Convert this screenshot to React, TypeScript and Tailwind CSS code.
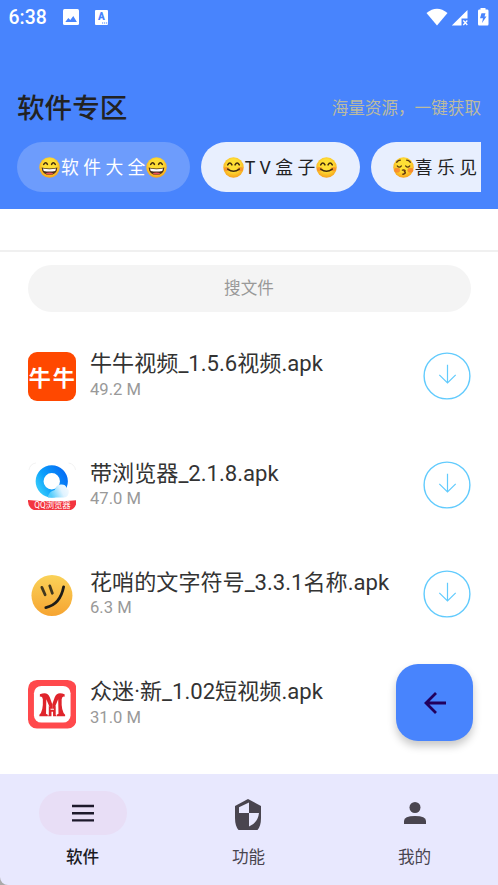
import type { ReactNode } from "react";

type Mood = "grin" | "blush" | "kiss";

const Smile = ({ kind }: { kind: Mood }) => (
  <svg viewBox="0 0 40 40" className="h-[21px] w-[21px] shrink-0" role="img">
    <defs>
      <radialGradient id={`face-${kind}`} cx="50%" cy="40%" r="60%">
        <stop offset="0.5" stopColor="#fedf35" />
        <stop offset="1" stopColor="#f7a21c" />
      </radialGradient>
    </defs>
    <circle cx="20" cy="20" r="19.5" fill={`url(#face-${kind})`} />
    {kind === "grin" && (
      <g>
        <path d="M9 14q4-6 7 0M24 14q3-6 7 0" fill="none" stroke="#422b0d" strokeWidth="3" strokeLinecap="round" />
        <path d="M5 20q15 4 30 0q-1 14-15 14T5 20z" fill="#4a2e18" />
        <path d="M7.500 22q12.500 3 25 0l-1.500 4.500q-11 2-22 0z" fill="#fff" />
        <path d="M12 31.500q8-4 16 0q-8 4-16 0z" fill="#e8505b" />
      </g>
    )}
    {kind === "blush" && (
      <g>
        <ellipse cx="7" cy="23" rx="5.500" ry="4" fill="#f78b29" opacity=".75" />
        <ellipse cx="33" cy="23" rx="5.500" ry="4" fill="#f78b29" opacity=".75" />
        <path d="M9 15q4-7 8 0M23 15q4-7 8 0M9 23q11 8.500 22 0" fill="none" stroke="#422b0d" strokeWidth="3" strokeLinecap="round" />
      </g>
    )}
    {kind === "kiss" && (
      <g>
        <ellipse cx="8" cy="25" rx="5.500" ry="4.500" fill="#f6762d" opacity=".7" />
        <ellipse cx="33" cy="25" rx="5.500" ry="4.500" fill="#f6762d" opacity=".7" />
        <path d="M8 17q4 5 8 0M24 17q4 5 8 0M7 10q3-4 7-4M26 6q4 0 7 4" fill="none" stroke="#5a3a10" strokeWidth="2.400" strokeLinecap="round" />
        <path d="M18 25q7-1 4 3q4 3-3 5" fill="none" stroke="#5a3210" strokeWidth="2.800" strokeLinecap="round" />
      </g>
    )}
  </svg>
);

const Chip = ({ kind, label, active, cut }: { kind: Mood; label: string; active?: boolean; cut?: boolean }) => (
  <div
    className={`flex h-[50px] items-center pl-[22px] text-[17.8px] whitespace-pre ${
      cut ? "flex-1 rounded-l-full" : "shrink-0 rounded-full pr-[22.5px]"
    } ${active ? "bg-[#6d9cfc] text-white" : "bg-[#e8effe] text-[#222]"}`}
  >
    <Smile kind={kind} />
    <span className="mx-[1px] mt-[2px]">{label}</span>
    {!cut && <Smile kind={kind} />}
  </div>
);

const NiuIcon = () => (
  <div className="flex h-[48.5px] w-[48.5px] items-center justify-center rounded-[9px] bg-[#ff4800] pt-[5px] text-[22px] leading-none font-bold tracking-[2px] text-white">
    <span className="-mr-[2px]">牛牛</span>
  </div>
);

const BrowserIcon = () => (
  <svg viewBox="0 0 49 49" className="h-[48.5px] w-[48.5px]">
    <defs>
      <linearGradient id="ring" x1="0" y1="0.8" x2="1" y2="0.2">
        <stop offset="0" stopColor="#2fc4fb" />
        <stop offset="0.35" stopColor="#0ba0fb" />
        <stop offset="1" stopColor="#0672f5" />
      </linearGradient>
      <linearGradient id="cloud" x1="0" y1="0.3" x2="1" y2="0">
        <stop offset="0" stopColor="#55cdfc" />
        <stop offset="0.55" stopColor="#e0f3ff" />
        <stop offset="1" stopColor="#f6fbff" />
      </linearGradient>
      <clipPath id="tile">
        <rect width="49" height="49" rx="9" />
      </clipPath>
    </defs>
    <path d="M1 8Q2 2 8 1M41 1Q47 2 48 8" fill="none" stroke="#eee" strokeWidth="0.8" />
    <circle cx="24" cy="19.500" r="12.300" fill="none" stroke="url(#ring)" strokeWidth="8" />
    <path d="M20 35.800q1-6 7-7.500q2-6 7-5.500q4 0 5 3.500q3 1.500 2 5.500q-1 4-5 4z" fill="url(#cloud)" />
    <g clipPath="url(#tile)">
      <path d="M0 38.500Q24 41 49 38.500V49H0Z" fill="#f3353f" />
      <text x="6.200" y="46.600" fontSize="8.600" textLength="37" lengthAdjust="spacingAndGlyphs" fontWeight="400" fill="#fff">
        QQ浏览器
      </text>
    </g>
  </svg>
);

const FaceIcon = () => (
  <svg viewBox="0 0 49 49" className="h-[48.5px] w-[48.5px]">
    <defs>
      <linearGradient id="amber" x1="0" y1="0" x2="0" y2="1">
        <stop offset="0" stopColor="#fad258" />
        <stop offset="1" stopColor="#f6a431" />
      </linearGradient>
    </defs>
    <circle cx="24.200" cy="24.800" r="20.700" fill="url(#amber)" />
    <g fill="none" stroke="#1d1c18" strokeWidth="2.800" strokeLinecap="round">
      <path d="M14 16.500l3.300 7.500" stroke="#41381f" />
      <path d="M22 15l2.600 7.500" stroke="#41381f" />
      <path d="M36 16q-3.500 18-18 21" />
    </g>
  </svg>
);

const MIcon = () => (
  <svg viewBox="0 0 49 49" className="h-[48.5px] w-[48.5px]">
    <rect width="49" height="49" rx="9" fill="#ff494c" />
    <rect x="6" y="6" width="37" height="37" rx="7.500" fill="#fff" />
    <g fill="#df242b">
      <path d="M12 14.500Q19.500 11 22 17.500L24.500 24.500V29H22.500L18.500 19.500L18.200 34L20 35V36.500H11.500V35Q15.500 32 15 19.500Q14.500 16 12 17Z" />
      <path d="M37 14.500Q29.500 11 27 17.500L24.500 24.500V29H26.500L30.500 19.500L30.800 34L29 35V36.500H37.500V35Q33.500 32 34 19.500Q34.500 16 37 17Z" />
      <path d="M21 26l1.800 2v2h3.400v-2l1.800-2v9l.8 1.500h-3.500V32h-1.600v4.500h-3.500L21 35z" />
    </g>
  </svg>
);

const Download = () => (
  <svg viewBox="0 0 48 48" className="-mt-[0.500px] h-12 w-12 shrink-0" fill="none" stroke="#62cbfd">
    <circle cx="24" cy="24" r="22.900" strokeWidth="1.400" />
    <path d="M24.500 12.700v18M16.300 22.800l8.200 8.200 8.200-8.200" strokeWidth="1.200" />
  </svg>
);

const FileRow = ({ icon, name, size, action = true }: { icon: ReactNode; name: string; size: string; action?: boolean }) => (
  <li className="flex h-[109.2px] items-start">
    <div className="h-[48.5px] w-[48.5px] shrink-0">{icon}</div>
    <div className="ml-[14px] flex-1 whitespace-nowrap">
      <div className="mt-[-2px] h-[28.5px] text-[22.1px] leading-[26px] text-[#333]">{name}</div>
      <div className="text-[16.6px] leading-[22px] text-[#999]">{size}</div>
    </div>
    {action && <Download />}
  </li>
);

const NavItem = ({ icon, label, active }: { icon: ReactNode; label: string; active?: boolean }) => (
  <div className={`flex flex-1 flex-col items-center pt-[17px] ${active ? "font-medium text-[#1c1b1f]" : "text-[#49454f]"}`}>
    <div className={`flex h-11 w-[88px] items-center justify-center rounded-full ${active ? "bg-[#e8def6]" : ""}`}>{icon}</div>
    <div className="mt-[11px] mr-[1px] text-[16.6px] leading-6">{label}</div>
  </div>
);

export default function App() {
  return (
    <div className="relative flex h-[885px] w-[498px] flex-col overflow-hidden bg-white font-[Roboto,'Noto_Sans_CJK_SC',sans-serif]">
      <header className="flex h-[209px] shrink-0 flex-col bg-[#4884fd]">
        <div className="flex h-[34px] items-center pr-[9px] pl-[8.5px] text-white">
          <span className="mt-[2px] text-[19.4px] leading-none font-medium">6:38</span>
          <svg viewBox="0 0 16 16" className="ml-[16.5px] h-4 w-4">
            <rect width="16" height="16" rx="1.500" fill="#fff" />
            <path d="M2.300 13l3-4 2 2 3-4 3.600 6z" fill="#4884fd" />
          </svg>
          <svg viewBox="0 0 13 15" className="ml-4 h-[15px] w-[13px]">
            <rect width="13" height="15" rx="1" fill="#fff" />
            <text x="6.500" y="10.200" textAnchor="middle" fontSize="10" fontWeight="900" fill="#4884fd">A</text>
            <path d="M7 13h1.200M9 13h1.200M11 13h1.200" stroke="#4884fd" strokeWidth="1.200" />
          </svg>
          <svg viewBox="0 0 63 18" className="-mt-[1px] ml-auto h-[18px] w-[63px]" fill="#fff">
            <path d="M0.500 5Q11 -3.500 21.500 5L11 17.500z" />
            <path d="M41.500 2v8.500h-6v7H25.800z" />
            <path d="M37.300 12.500l4 4.500m0-4.500l-4 4.500" stroke="#fff" strokeWidth="1.300" />
            <path d="M54.500 0h5v1.600h2q1 0 1 1.500v13q0 1.500-1 1.500h-8.500q-1 0-1-1.500v-13q0-1.500 1-1.500H54.500z" />
            <path d="M55.500 5.200h4l-1 3.200h2l-4.500 6.600 1-4.800h-3z" fill="#4884fd" />
          </svg>
        </div>
        <div className="mt-[55px] flex h-10 items-center justify-between pr-[17px] pl-[17px]">
          <h1 className="text-[27.6px] leading-10 font-medium text-[#222]">软件专区</h1>
          <p className="text-[16.6px] text-[#bcbba0]">海量资源，一键获取</p>
        </div>
        <div className="mx-[17px] mt-[13px] flex gap-[11px] overflow-hidden">
          <Chip kind="grin" label="软 件 大 全" active />
          <Chip kind="blush" label="T V 盒 子" />
          <Chip kind="kiss" label="喜 乐 见" cut />
        </div>
      </header>
      <div className="h-[41px] shrink-0" />
      <div className="h-[2px] shrink-0 bg-[#f0f0f0]" />
      <main className="flex-1 overflow-hidden pr-[27.5px] pl-[27.5px] pt-[13.3px]">
        <div className="flex h-[47px] items-center justify-center rounded-full bg-[#f4f4f4] pt-[1px] text-[16.6px] text-[#999]">搜文件</div>
        <ul className="mt-[40.2px]">
          <FileRow icon={<NiuIcon />} name="牛牛视频_1.5.6视频.apk" size="49.2 M" />
          <FileRow icon={<BrowserIcon />} name="带浏览器_2.1.8.apk" size="47.0 M" />
          <FileRow icon={<FaceIcon />} name="花哨的文字符号_3.3.1名称.apk" size="6.3 M" />
          <FileRow icon={<MIcon />} name="众迷·新_1.02短视频.apk" size="31.0 M" action={false} />
        </ul>
      </main>
      <nav className="flex h-[111px] shrink-0 rounded-bl-[8px] bg-[#e8e8fe] shadow-[-8px_8px_0_#aaa]">
        <NavItem
          active
          label="软件"
          icon={
            <svg viewBox="0 0 22 18" className="h-[18px] w-[22px]" stroke="#1d192b" strokeWidth="2.400">
              <path d="M0 2h22M0 9.200h22M0 16.400h22" />
            </svg>
          }
        />
        <NavItem
          label="功能"
          icon={
            <svg viewBox="0 0 26 31" className="mt-[2px] mr-[2px] h-[31px] w-[26px]">
              <path d="M0 7L13 0L26 7V19Q26 27 22.500 31H3.500Q0 27 0 19Z" fill="#49454f" />
              <path d="M14 3.500V14H4V8.300ZM14 14H24Q23 23.500 14 27.500Z" fill="#e8e8fe" />
            </svg>
          }
        />
        <NavItem
          label="我的"
          icon={
            <svg viewBox="0 0 22 22" className="h-[22px] w-[22px]" fill="#49454f">
              <circle cx="11" cy="5.500" r="5.500" />
              <path d="M0 22v-3q0-5 11-5t11 5v3z" />
            </svg>
          }
        />
      </nav>
      <button className="absolute top-[664px] left-[396px] flex h-[77px] w-[77px] items-center justify-center rounded-[22px] bg-[#4884fd] shadow-[0_5px_9px_rgba(0,0,0,0.22)]">
        <svg viewBox="0 0 22 22" className="h-[22px] w-[22px]" fill="none" stroke="#21005d" strokeWidth="2.800">
          <path d="M22 11H2M12 1L2 11l10 10" />
        </svg>
      </button>
    </div>
  );
}
